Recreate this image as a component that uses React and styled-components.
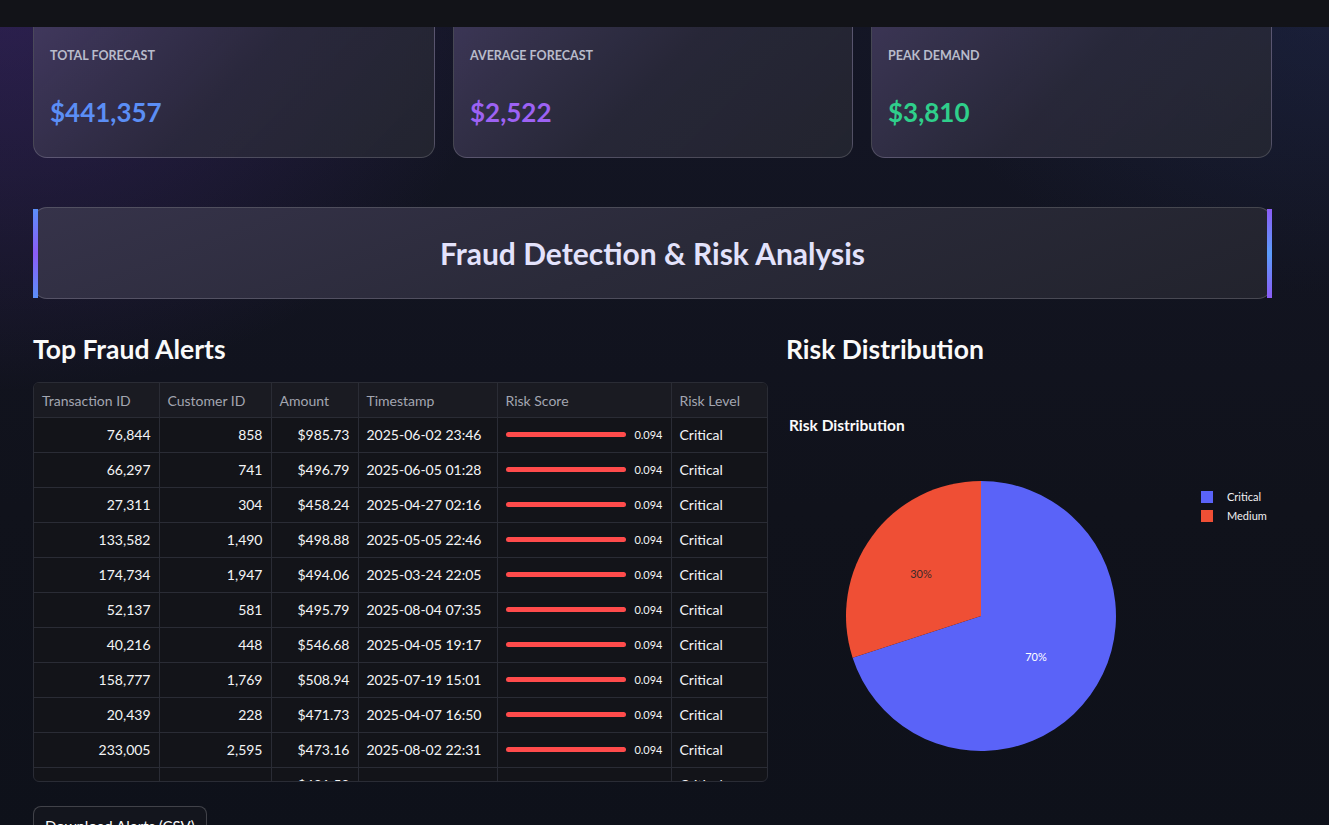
import React from 'react';
import styled, { createGlobalStyle } from 'styled-components';

const GlobalStyle = createGlobalStyle`
  html, body {
    margin: 0;
    padding: 0;
  }
  body {
    font-family: "Source Sans Pro", Lato, "Noto Sans", sans-serif;
    color: #fafafa;
    background-color: #0f111a;
    background-image:
      radial-gradient(ellipse 720px 560px at 0% 0%, rgba(74, 44, 130, 0.45), transparent 70%),
      radial-gradient(ellipse 600px 420px at 100% 0%, rgba(38, 50, 95, 0.35), transparent 70%),
      linear-gradient(180deg, #141626 0%, #10121b 60%, #0e111a 100%);
    min-height: 100vh;
    overflow: hidden;
  }
`;

const TopBar = styled.header`
  position: fixed;
  top: 0;
  left: 0;
  right: 0;
  height: 27px;
  background: #121318;
  z-index: 10;
`;

const Page = styled.main`
  width: 1239px;
  padding: 8px 0 0 33px;
`;

const MetricRow = styled.div`
  display: grid;
  grid-template-columns: 402px 400px 401px;
  gap: 18px;
`;

const MetricCard = styled.div`
  height: 150px;
  box-sizing: border-box;
  padding: 39px 16px 0;
  border-radius: 14px;
  border: 1px solid rgba(255, 255, 255, 0.16);
  background: linear-gradient(135deg, rgba(72, 64, 100, 0.78) 0%, rgba(46, 45, 62, 0.75) 50%, rgba(38, 40, 50, 0.8) 100%);
`;

const MetricLabel = styled.div`
  font-size: 12.5px;
  line-height: 16px;
  font-weight: 700;
  text-transform: uppercase;
  color: #b9bccb;
`;

const MetricValue = styled.div`
  margin-top: 32px;
  font-size: 26px;
  line-height: 32px;
  font-weight: 700;
  color: ${(p) => p.$color};
`;

const Banner = styled.section`
  position: relative;
  margin-top: 49px;
  height: 92px;
  box-sizing: border-box;
  border-radius: 14px;
  border: 1px solid rgba(255, 255, 255, 0.16);
  background: linear-gradient(160deg, #36334a 0%, #2a2a39 50%, #22232d 100%);
  display: flex;
  align-items: center;
  justify-content: center;

  &::before,
  &::after {
    content: '';
    position: absolute;
    top: 1px;
    bottom: 0px;
    width: 5px;
  }
  &::before {
    left: -1px;
    background: linear-gradient(180deg, #5b8ff9 0%, #8b5cf6 50%, #5b8ff9 100%);
  }
  &::after {
    right: -1px;
    background: linear-gradient(180deg, #8b5cf6 0%, #5b9dfb 50%, #8b5cf6 100%);
  }
`;

const BannerTitle = styled.h1`
  margin: 0;
  font-size: 30px;
  font-weight: 700;
  color: #e3e2fb;
`;

const Columns = styled.div`
  display: grid;
  grid-template-columns: 735px 486px;
  gap: 18px;
  margin-top: 32px;
`;

const Column = styled.div`
  display: flex;
  flex-direction: column;
`;

const SectionTitle = styled.h2`
  margin: 0 0 15px;
  font-size: 26.5px;
  line-height: 36px;
  font-weight: 700;
  color: #fafafa;
`;

const TableFrame = styled.div`
  height: 400px;
  box-sizing: border-box;
  border: 1px solid #2a2c35;
  border-radius: 6px;
  overflow: hidden;
  background: #131419;
`;

const Table = styled.table`
  width: 100%;
  table-layout: fixed;
  border-collapse: collapse;
  font-size: 14px;
`;

const HeadCell = styled.th`
  height: 34px;
  padding: 0 8px;
  text-align: left;
  font-weight: 400;
  color: #a3a6b1;
  background: #1a1b22;
  border-right: 1px solid #2a2c35;
  border-bottom: 1px solid #2a2c35;
  white-space: nowrap;
  &:last-child { border-right: none; }
`;

const Cell = styled.td`
  height: 33px;
  padding: 0 8px 1px;
  text-align: ${(p) => (p.$right ? 'right' : 'left')};
  color: #f4f4f6;
  border-right: 1px solid #2a2c35;
  border-bottom: 1px solid #2a2c35;
  white-space: nowrap;
  &:last-child { border-right: none; }
`;

const ScoreWrap = styled.div`
  display: flex;
  align-items: center;
  gap: 8px;
`;

const ScoreBar = styled.div`
  width: 123px;
  height: 5px;
  border-radius: 3px;
  background: #ff4b4b;
`;

const ScoreValue = styled.span`
  font-size: 11px;
  color: #f4f4f6;
`;

const DownloadButton = styled.button`
  align-self: flex-start;
  margin-top: 24px;
  height: 40px;
  padding: 0 11px;
  border-radius: 8px;
  border: 1px solid rgba(250, 250, 250, 0.2);
  background: #13151d;
  color: #fafafa;
  font-family: inherit;
  font-size: 15px;
`;

const ChartBox = styled.div`
  height: 400px;
`;

const columns = [
  { name: 'Transaction ID', width: 125 },
  { name: 'Customer ID', width: 112 },
  { name: 'Amount', width: 87 },
  { name: 'Timestamp', width: 139 },
  { name: 'Risk Score', width: 174 },
  { name: 'Risk Level', width: 98 },
];

const alerts = [
  ['76,844', '858', '$985.73', '2025-06-02 23:46'],
  ['66,297', '741', '$496.79', '2025-06-05 01:28'],
  ['27,311', '304', '$458.24', '2025-04-27 02:16'],
  ['133,582', '1,490', '$498.88', '2025-05-05 22:46'],
  ['174,734', '1,947', '$494.06', '2025-03-24 22:05'],
  ['52,137', '581', '$495.79', '2025-08-04 07:35'],
  ['40,216', '448', '$546.68', '2025-04-05 19:17'],
  ['158,777', '1,769', '$508.94', '2025-07-19 15:01'],
  ['20,439', '228', '$471.73', '2025-04-07 16:50'],
  ['233,005', '2,595', '$473.16', '2025-08-02 22:31'],
  ['', '', '$481.52', ''],
];

function RiskPie() {
  const cx = 195;
  const cy = 234;
  const r = 135;
  const end = (252 * Math.PI) / 180;
  const ex = cx + r * Math.sin(end);
  const ey = cy - r * Math.cos(end);
  return (
    <svg width="486" height="400" viewBox="0 0 486 400">
      <text x="3" y="49" fill="#fafafa" fontSize="15.5" fontWeight="700" fontFamily="Source Sans Pro, Lato, sans-serif">
        Risk Distribution
      </text>
      <path d={`M${cx},${cy} L${cx},${cy - r} A${r},${r} 0 1 1 ${ex},${ey} Z`} fill="#5a63f8" />
      <path d={`M${cx},${cy} L${ex},${ey} A${r},${r} 0 0 1 ${cx},${cy - r} Z`} fill="#ef4f35" />
      <text x="135" y="196" textAnchor="middle" fill="#3a2a2a" fontSize="11" fontFamily="Lato, sans-serif">30%</text>
      <text x="250" y="279" textAnchor="middle" fill="#ffffff" fontSize="11" fontFamily="Lato, sans-serif">70%</text>
      <rect x="415" y="109" width="12" height="12" fill="#5a63f8" />
      <rect x="415" y="128" width="12" height="12" fill="#ef4f35" />
      <text x="441" y="119" fill="#f0f0f2" fontSize="11" fontFamily="Lato, sans-serif">Critical</text>
      <text x="441" y="138" fill="#f0f0f2" fontSize="11" fontFamily="Lato, sans-serif">Medium</text>
    </svg>
  );
}

export default function App() {
  return (
    <>
      <GlobalStyle />
      <TopBar />
      <Page>
        <MetricRow>
          <MetricCard>
            <MetricLabel>Total Forecast</MetricLabel>
            <MetricValue $color="#5b8ef5">$441,357</MetricValue>
          </MetricCard>
          <MetricCard>
            <MetricLabel>Average Forecast</MetricLabel>
            <MetricValue $color="#9d62f4">$2,522</MetricValue>
          </MetricCard>
          <MetricCard>
            <MetricLabel>Peak Demand</MetricLabel>
            <MetricValue $color="#2fcf8b">$3,810</MetricValue>
          </MetricCard>
        </MetricRow>

        <Banner>
          <BannerTitle>Fraud Detection &amp; Risk Analysis</BannerTitle>
        </Banner>

        <Columns>
          <Column>
            <SectionTitle>Top Fraud Alerts</SectionTitle>
            <TableFrame>
              <Table>
                <colgroup>
                  {columns.map((c) => (
                    <col key={c.name} style={{ width: c.width }} />
                  ))}
                </colgroup>
                <thead>
                  <tr>
                    {columns.map((c) => (
                      <HeadCell key={c.name}>{c.name}</HeadCell>
                    ))}
                  </tr>
                </thead>
                <tbody>
                  {alerts.map((row, i) => (
                    <tr key={i}>
                      <Cell $right>{row[0]}</Cell>
                      <Cell $right>{row[1]}</Cell>
                      <Cell $right>{row[2]}</Cell>
                      <Cell>{row[3]}</Cell>
                      <Cell>
                        {row[3] && (
                          <ScoreWrap>
                            <ScoreBar />
                            <ScoreValue>0.094</ScoreValue>
                          </ScoreWrap>
                        )}
                      </Cell>
                      <Cell>Critical</Cell>
                    </tr>
                  ))}
                </tbody>
              </Table>
            </TableFrame>
            <DownloadButton>Download Alerts (CSV)</DownloadButton>
          </Column>
          <Column>
            <SectionTitle>Risk Distribution</SectionTitle>
            <ChartBox>
              <RiskPie />
            </ChartBox>
          </Column>
        </Columns>
      </Page>
    </>
  );
}
